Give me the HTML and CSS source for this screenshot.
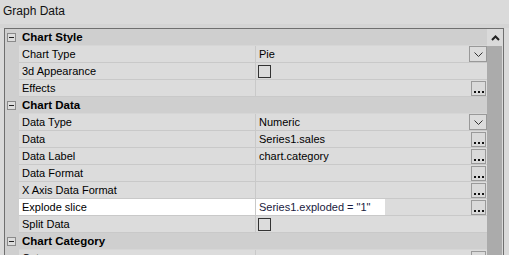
FILE: index.html
```html
<!DOCTYPE html>
<html>
<head>
    <meta charset="utf-8">
    <title>Graph Data</title>
    <link rel="stylesheet" href="styles.css">
</head>
<body>
    <div class="title">Graph Data</div>
    <div class="band"></div>
    <div class="grid">
        <div class="rows">
            <div class="cat"><div class="gut"><span class="toggle"></span></div><div class="cat-name">Chart Style</div></div>
            <div class="row"><div class="gut"></div><div class="label">Chart Type</div><div class="value"><span class="text">Pie</span><span class="drop"><svg width="9" height="5" viewBox="0 0 9 5"><polyline points="0.5,0.5 4.5,4.5 8.5,0.5" fill="none" stroke="#333" stroke-width="1"/></svg></span></div></div>
            <div class="row"><div class="gut"></div><div class="label">3d Appearance</div><div class="value"><span class="check"></span></div></div>
            <div class="row"><div class="gut"></div><div class="label">Effects</div><div class="value"><span class="text"></span><span class="dots"><i></i><i></i><i></i></span></div></div>

            <div class="cat"><div class="gut"><span class="toggle"></span></div><div class="cat-name">Chart Data</div></div>
            <div class="row"><div class="gut"></div><div class="label">Data Type</div><div class="value"><span class="text">Numeric</span><span class="drop"><svg width="9" height="5" viewBox="0 0 9 5"><polyline points="0.5,0.5 4.5,4.5 8.5,0.5" fill="none" stroke="#333" stroke-width="1"/></svg></span></div></div>
            <div class="row"><div class="gut"></div><div class="label">Data</div><div class="value"><span class="text">Series1.sales</span><span class="dots"><i></i><i></i><i></i></span></div></div>
            <div class="row"><div class="gut"></div><div class="label">Data Label</div><div class="value"><span class="text">chart.category</span><span class="dots"><i></i><i></i><i></i></span></div></div>
            <div class="row"><div class="gut"></div><div class="label">Data Format</div><div class="value"><span class="text"></span><span class="dots"><i></i><i></i><i></i></span></div></div>
            <div class="row"><div class="gut"></div><div class="label">X Axis Data Format</div><div class="value"><span class="text"></span><span class="dots"><i></i><i></i><i></i></span></div></div>
            <div class="row selected"><div class="gut"></div><div class="label">Explode slice</div><div class="value"><span class="edit">Series1.exploded = "1"</span><span class="text"></span><span class="dots"><i></i><i></i><i></i></span></div></div>
            <div class="row"><div class="gut"></div><div class="label">Split Data</div><div class="value"><span class="check"></span></div></div>

            <div class="cat"><div class="gut"><span class="toggle"></span></div><div class="cat-name">Chart Category</div></div>
            <div class="row"><div class="gut"></div><div class="label">Category</div><div class="value"><span class="text"></span><span class="dots"><i></i><i></i><i></i></span></div></div>
        </div>
        <div class="scroll">
            <div class="up"><svg width="9" height="6" viewBox="0 0 9 6"><polyline points="1,5 4.5,1.5 8,5" fill="none" stroke="#222" stroke-width="2"/></svg></div>
            <div class="thumb"></div>
        </div>
    </div>
</body>
</html>
```

FILE: styles.css
```css
html, body {
    margin: 0;
    padding: 0;
    height: 100%;
    overflow: hidden;
}

body {
    background-color: #dadada;
    font-family: "Liberation Sans", Arial, sans-serif;
    font-size: 11px;
    color: #000;
}

.title {
    height: 20px;
    padding: 4px 0 0 3px;
    font-size: 12px;
    line-height: 15px;
    color: #111;
}

.band {
    height: 4px;
    background-color: #d4d4d4;
}

.grid {
    display: flex;
    margin-left: 4px;
    width: 498px;
    border: 1px solid #6f6f6f;
    border-bottom: none;
    height: 226px;
    overflow: hidden;
}

.rows {
    width: 482px;
    display: flex;
    flex-direction: column;
}

.row, .cat {
    display: flex;
    height: 17px;
    flex: none;
}

.gut {
    width: 14px;
    background-color: #cfcfcf;
    flex: none;
    position: relative;
}

.cat {
    background-color: #cfcfcf;
}

    .cat .cat-name {
        padding-left: 3px;
        height: 16px;
        line-height: 16px;
        font-weight: bold;
        font-size: 11.5px;
        border-bottom: 1px solid #d6d6d6;
        flex: 1;
    }

.toggle {
    position: absolute;
    left: 2px;
    top: 4px;
    width: 7px;
    height: 7px;
    border: 1px solid #8a8a8a;
    background-color: #dcdcdc;
}

    .toggle:after {
        content: "";
        position: absolute;
        left: 1px;
        top: 3px;
        width: 5px;
        height: 1px;
        background-color: #222;
    }

.label {
    width: 233px;
    padding-left: 3px;
    height: 16px;
    line-height: 16px;
    border-bottom: 1px solid #c9c9c9;
    border-right: 1px solid #c9c9c9;
    background-color: #dcdcdc;
    white-space: nowrap;
}

.value {
    flex: 1;
    display: flex;
    height: 16px;
    line-height: 16px;
    border-bottom: 1px solid #c9c9c9;
    background-color: #dcdcdc;
}

    .value .text {
        flex: 1;
        padding-left: 3px;
        white-space: nowrap;
    }

.selected .label {
    background-color: #fff;
    box-shadow: -4px 0 0 #fff;
}

.edit {
    width: 126px;
    padding-left: 3px;
    background-color: #fff;
    color: #1a1a40;
    white-space: nowrap;
}

.drop {
    width: 16px;
    height: 14px;
    border: 1px solid #999;
    display: flex;
    align-items: center;
    justify-content: center;
}

    .drop svg {
        display: block;
    }

.dots {
    width: 13px;
    height: 13px;
    margin: 1px 1px 0 0;
    border: 1px solid #9a9a9a;
    background-color: #dadada;
    display: flex;
    align-items: flex-end;
    justify-content: center;
    gap: 2px;
    box-sizing: content-box;
}

    .dots i {
        display: block;
        width: 2px;
        height: 2px;
        margin-bottom: 2px;
        background-color: #111;
    }

.check {
    width: 11px;
    height: 11px;
    margin: 2px 0 0 2px;
    border: 1px solid #333;
}

.scroll {
    width: 16px;
    display: flex;
    flex-direction: column;
}

.up {
    height: 17px;
    display: flex;
    align-items: center;
    justify-content: center;
}

.thumb {
    flex: 1;
    width: 15px;
    background-color: #ababab;
}
```
